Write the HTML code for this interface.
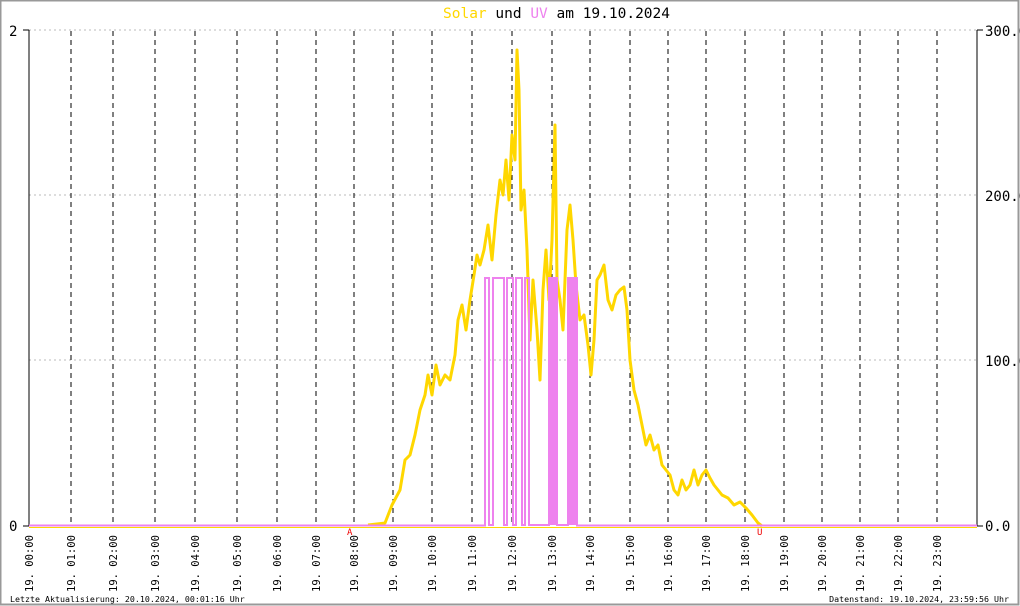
<!DOCTYPE html><html><head><meta charset="utf-8"><style>body{margin:0;background:#fff}svg{display:block}text{font-family:"DejaVu Sans Mono","Liberation Mono",monospace}</style></head><body>
<svg width="1020" height="606" viewBox="0 0 1020 606" xmlns="http://www.w3.org/2000/svg">
<rect x="0" y="0" width="1020" height="606" fill="#fff"/>
<rect x="0.5" y="0.5" width="1018" height="604" fill="none" stroke="#999" stroke-width="2"/>
<text x="443" y="18" font-size="14.5" xml:space="preserve"><tspan fill="#ffd700">Solar</tspan><tspan fill="#000"> und </tspan><tspan fill="#ee82ee">UV</tspan><tspan fill="#000"> am 19.10.2024</tspan></text>
<g stroke="#bbb" stroke-dasharray="2,3"><line x1="29" y1="30" x2="977" y2="30"/><line x1="29" y1="195" x2="977" y2="195"/><line x1="29" y1="360" x2="977" y2="360"/></g>
<g stroke="#000" stroke-dasharray="5,4">
<line x1="71" y1="31" x2="71" y2="526"/><line x1="113" y1="31" x2="113" y2="526"/><line x1="155" y1="31" x2="155" y2="526"/><line x1="195" y1="31" x2="195" y2="526"/><line x1="237" y1="31" x2="237" y2="526"/><line x1="277" y1="31" x2="277" y2="526"/><line x1="316" y1="31" x2="316" y2="526"/><line x1="354" y1="31" x2="354" y2="526"/><line x1="393" y1="31" x2="393" y2="526"/><line x1="432" y1="31" x2="432" y2="526"/><line x1="472" y1="31" x2="472" y2="526"/><line x1="512" y1="31" x2="512" y2="526"/><line x1="552" y1="31" x2="552" y2="526"/><line x1="590" y1="31" x2="590" y2="526"/><line x1="630" y1="31" x2="630" y2="526"/><line x1="668" y1="31" x2="668" y2="526"/><line x1="706" y1="31" x2="706" y2="526"/><line x1="745" y1="31" x2="745" y2="526"/><line x1="784" y1="31" x2="784" y2="526"/><line x1="822" y1="31" x2="822" y2="526"/><line x1="860" y1="31" x2="860" y2="526"/><line x1="898" y1="31" x2="898" y2="526"/><line x1="937" y1="31" x2="937" y2="526"/>
</g>
<g stroke="#000"><line x1="29" y1="30" x2="29" y2="526"/><line x1="977" y1="30" x2="977" y2="526"/><line x1="23" y1="30" x2="29" y2="30"/><line x1="23" y1="526" x2="29" y2="526"/><line x1="977" y1="30" x2="983" y2="30"/><line x1="977" y1="526" x2="983" y2="526"/></g>
<text x="9" y="36" font-size="14">2</text><text x="9" y="531" font-size="14">0</text>
<text x="985" y="36" font-size="14">300.0</text><text x="985" y="201" font-size="14">200.0</text><text x="985" y="366" font-size="14">100.0</text><text x="985" y="531" font-size="14">0.0</text>
<line x1="29" y1="527.5" x2="977" y2="527.5" stroke="#ffd700" stroke-width="1"/>
<polyline fill="none" stroke="#ffd700" stroke-width="3" stroke-linejoin="round" points="368,525 385,523 392,505 400,490 405,460 410,455 415,435 420,410 425,395 428,375 432,395 436,365 440,385 445,375 450,380 455,355 458,320 462,305 466,330 470,300 474,275 477,255 480,265 484,250 488,225 492,260 496,215 500,180 503,195 506,160 509,200 512,135 515,160 517,50 519,90 521,210 524,190 527,250 530,340 533,280 537,330 540,380 543,290 546,250 549,300 552,240 555,125 557,280 560,300 563,330 567,230 570,205 573,240 576,285 580,320 584,315 588,345 591,375 594,340 597,280 600,275 604,265 608,300 612,310 616,295 620,290 624,287 627,310 630,360 634,390 638,405 642,425 646,445 650,435 654,450 658,445 662,465 666,470 670,475 674,490 678,495 682,480 686,490 690,485 694,470 698,485 702,475 706,470 710,478 714,485 718,490 722,495 728,498 734,505 740,502 746,508 752,515 758,523 762,526"/>
<polyline fill="none" stroke="#ee82ee" stroke-width="2" points="29,525.5 485,525.5 485,278 489,278 489,525 493,525 493,278 504,278 504,525 507,525 507,278 513,278 513,525 516,525 516,278 522,278 522,525 525,525 525,278 529,278 529,525 549,525 549,278 557,278 557,525 568,525 568,278 577,278 577,525.5 977,525.5"/>
<rect x="550" y="278" width="6" height="247" fill="#ee82ee"/><rect x="569" y="278" width="7" height="247" fill="#ee82ee"/>
<text x="347" y="535" font-size="9" fill="#e00">A</text><text x="757" y="535" font-size="9" fill="#e00">U</text>
<g font-size="10.5">
<text transform="translate(33,592) rotate(-90)">19. 00:00</text><text transform="translate(75,592) rotate(-90)">19. 01:00</text><text transform="translate(117,592) rotate(-90)">19. 02:00</text><text transform="translate(159,592) rotate(-90)">19. 03:00</text><text transform="translate(199,592) rotate(-90)">19. 04:00</text><text transform="translate(241,592) rotate(-90)">19. 05:00</text><text transform="translate(281,592) rotate(-90)">19. 06:00</text><text transform="translate(320,592) rotate(-90)">19. 07:00</text><text transform="translate(358,592) rotate(-90)">19. 08:00</text><text transform="translate(397,592) rotate(-90)">19. 09:00</text><text transform="translate(436,592) rotate(-90)">19. 10:00</text><text transform="translate(476,592) rotate(-90)">19. 11:00</text><text transform="translate(516,592) rotate(-90)">19. 12:00</text><text transform="translate(556,592) rotate(-90)">19. 13:00</text><text transform="translate(594,592) rotate(-90)">19. 14:00</text><text transform="translate(634,592) rotate(-90)">19. 15:00</text><text transform="translate(672,592) rotate(-90)">19. 16:00</text><text transform="translate(710,592) rotate(-90)">19. 17:00</text><text transform="translate(749,592) rotate(-90)">19. 18:00</text><text transform="translate(788,592) rotate(-90)">19. 19:00</text><text transform="translate(826,592) rotate(-90)">19. 20:00</text><text transform="translate(864,592) rotate(-90)">19. 21:00</text><text transform="translate(902,592) rotate(-90)">19. 22:00</text><text transform="translate(941,592) rotate(-90)">19. 23:00</text>
</g>
<text x="10" y="602" font-size="8.3">Letzte Aktualisierung: 20.10.2024, 00:01:16 Uhr</text>
<text x="1009" y="602" font-size="8.3" text-anchor="end">Datenstand: 19.10.2024, 23:59:56 Uhr</text>
</svg></body></html>
